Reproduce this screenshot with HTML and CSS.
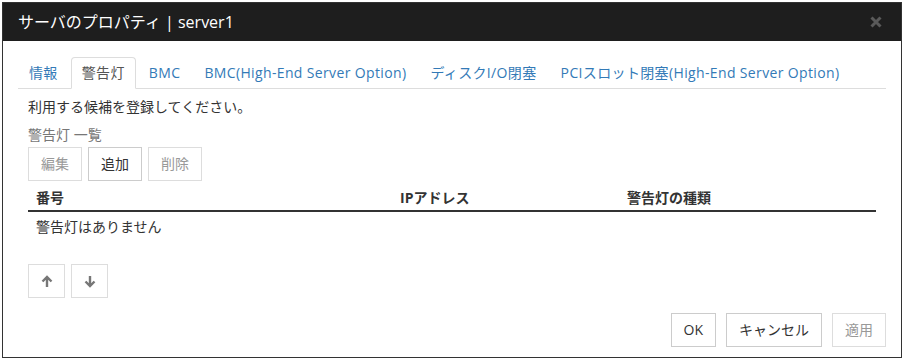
FILE: index.html
```html
<!DOCTYPE html>
<html lang="ja">
<head>
    <meta charset="UTF-8">
    <title>サーバのプロパティ | server1</title>
    <link rel="stylesheet" href="styles.css">
</head>
<body>

    <div class="dialog">
        <div class="dialog-header">
            <h1 class="dialog-title">サーバのプロパティ | server1</h1>
            <span class="dialog-close" title="閉じる">
                <svg width="12" height="12" viewBox="0 0 12 12"><path d="M1.5 1.5 L10.5 10.5 M10.5 1.5 L1.5 10.5" stroke="#5a5a5a" stroke-width="3"/></svg>
            </span>
        </div>

        <div class="dialog-body">
            <ul class="tabs">
                <li><a href="#">情報</a></li>
                <li class="active"><a href="#">警告灯</a></li>
                <li><a href="#">BMC</a></li>
                <li><a href="#">BMC(High-End Server Option)</a></li>
                <li><a href="#">ディスクI/O閉塞</a></li>
                <li><a href="#">PCIスロット閉塞(High-End Server Option)</a></li>
            </ul>

            <div class="tab-content">
                <p class="intro">利用する候補を登録してください。</p>
                <div class="list-label">警告灯 一覧</div>

                <div class="toolbar">
                    <button class="btn" disabled>編集</button>
                    <button class="btn">追加</button>
                    <button class="btn" disabled>削除</button>
                </div>

                <table class="lamp-table">
                    <thead>
                        <tr>
                            <th class="col-no">番号</th>
                            <th class="col-ip">IPアドレス</th>
                            <th>警告灯の種類</th>
                        </tr>
                    </thead>
                    <tbody>
                        <tr>
                            <td colspan="3">警告灯はありません</td>
                        </tr>
                    </tbody>
                </table>

                <div class="order-buttons">
                    <button class="btn btn-icon" title="上へ">
                        <svg width="12" height="13" viewBox="0 0 12 13"><path d="M6 12 V2 M1.5 6.5 L6 2 L10.5 6.5" fill="none" stroke="#777" stroke-width="2.4"/></svg>
                    </button>
                    <button class="btn btn-icon" title="下へ">
                        <svg width="12" height="13" viewBox="0 0 12 13"><path d="M6 1 V11 M1.5 6.5 L6 11 L10.5 6.5" fill="none" stroke="#777" stroke-width="2.4"/></svg>
                    </button>
                </div>
            </div>

            <div class="dialog-footer">
                <button class="btn">OK</button>
                <button class="btn">キャンセル</button>
                <button class="btn" disabled>適用</button>
            </div>
        </div>
    </div>

</body>
</html>
```

FILE: styles.css
```css
/* Janela de propriedades */
body {
    margin: 2px;
    background-color: #fff;
    font-family: "Open Sans", "Noto Sans CJK JP", sans-serif;
    font-size: 14px;
    line-height: 20px;
    color: #333;
}
.dialog {
    width: 900px;
    height: 356px;
    box-sizing: border-box;
    border: 1px solid #333;
    background-color: #fff;
}
.dialog-header {
    height: 38px;
    background-color: #1e1e1e;
    padding: 0 19px 0 15px;
    display: flex;
    align-items: center;
    justify-content: space-between;
}
.dialog-title {
    margin: 0;
    font-size: 16px;
    font-weight: normal;
    color: #fff;
}
.dialog-close {
    display: flex;
    cursor: pointer;
}
.dialog-body {
    padding: 16px 15px 0;
}

/* Abas */
.tabs {
    list-style: none;
    margin: 0;
    padding: 0;
    display: flex;
    border-bottom: 1px solid #ddd;
}
.tabs li {
    margin-bottom: -1px;
}
.tabs a {
    display: block;
    padding: 5px 10px;
    margin-right: 2px;
    border: 1px solid transparent;
    border-radius: 4px 4px 0 0;
    color: #337ab7;
    text-decoration: none;
    letter-spacing: 0.36px;
}
.tabs li.active a {
    color: #555;
    border-color: #ddd #ddd transparent;
    background-color: #fff;
}
.tab-content {
    padding: 0 10px;
}
.intro {
    margin: 8px 0 0;
}
.list-label {
    margin-top: 8px;
    color: #777;
}

/* Botões */
.btn {
    font-family: inherit;
    font-size: 14px;
    line-height: 20px;
    padding: 6px 12px;
    border: 1px solid #ccc;
    border-radius: 0;
    background-color: #fff;
    color: #333;
    cursor: pointer;
}
.btn:disabled {
    border-color: #ddd;
    color: #999;
    cursor: default;
}
.toolbar {
    margin-top: 2px;
    display: flex;
    gap: 6px;
}
.btn-icon {
    width: 37px;
    height: 34px;
    padding: 0;
    border-color: #ddd;
    display: flex;
    align-items: center;
    justify-content: center;
}

/* Tabela */
.lamp-table {
    width: 100%;
    margin-top: 2px;
    border-collapse: collapse;
}
.lamp-table th {
    text-align: left;
    padding: 5px 8px 2px;
    border-bottom: 2px solid #333;
}
.lamp-table td {
    padding: 5px 8px;
}
.col-no {
    width: 348px;
}
.col-ip {
    width: 211px;
}
.order-buttons {
    margin-top: 22px;
    display: flex;
    gap: 6px;
}
.dialog-footer {
    margin-top: 15px;
    display: flex;
    justify-content: flex-end;
    gap: 10px;
}
```
